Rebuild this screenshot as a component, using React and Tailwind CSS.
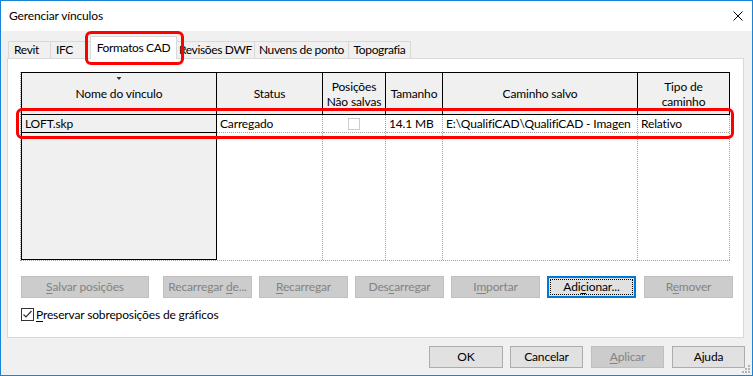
import React from "react";

function Btn({ w, children, disabled, focused, className = "" }) {
  if (focused) {
    return (
      <div className={`h-[22px] ${w} border-2 border-[#0078d7] bg-[#e1e1e1] p-[1px] ${className}`}>
        <div className="h-full w-full border border-dotted border-black flex items-center justify-center text-black">
          {children}
        </div>
      </div>
    );
  }
  return (
    <div
      className={`h-[22px] ${w} border flex items-center justify-center ${
        disabled ? "bg-[#cccccc] border-[#bfbfbf] text-[#838383]" : "bg-[#e1e1e1] border-[#adadad] text-black"
      } ${className}`}
    >
      {children}
    </div>
  );
}

const U = ({ children }) => <span className="underline underline-offset-2">{children}</span>;

export default function App() {
  return (
    <div className="relative w-[753px] h-[376px] overflow-hidden bg-[#f0f0f0] border border-[#1883d7] font-['Lato','Noto_Sans',sans-serif] text-[12px] leading-none text-black whitespace-nowrap tracking-[-0.15px]">
      {/* Title bar */}
      <div className="h-[30px] bg-white flex items-center justify-between pl-[8px] pr-[9px]">
        <span className="text-[12px]">Gerenciar vínculos</span>
        <svg width="10" height="10" viewBox="0 0 10 10">
          <path d="M0.5 0.5L9.5 9.5M9.5 0.5L0.5 9.5" stroke="#000" strokeWidth="1" fill="none" />
        </svg>
      </div>

      <div className="pl-[6px] pr-[8px]">
        {/* Tabs */}
        <div className="h-[27px] flex items-end pl-[1px] tracking-[-0.35px]">
          <div className="h-[17px] w-[42px] border-l border-t border-[#d9d9d9] flex items-center pl-[5px]">Revit</div>
          <div className="h-[17px] w-[40px] border-l border-t border-[#d9d9d9] flex items-center pl-[5px]">IFC</div>
          <div className="relative z-10 -mb-[1px] h-[23px] w-[87px] border-l border-t border-r border-[#d9d9d9] bg-white flex items-center justify-center pb-[1px]">
            Formatos CAD
          </div>
          <div className="h-[17px] w-[78px] border-t border-r border-[#d9d9d9] flex items-center justify-center">Revisões DWF</div>
          <div className="h-[17px] w-[94px] border-t border-r border-[#d9d9d9] flex items-center justify-center">Nuvens de ponto</div>
          <div className="h-[17px] w-[62px] border-t border-r border-[#d9d9d9] flex items-center justify-center">Topografia</div>
        </div>

        {/* Panel */}
        <div className="h-[280px] bg-white border border-[#d9d9d9] pl-[12px] pt-[13px]">
          {/* Table */}
          <div className="w-[710px] border-l border-[#a0a0a0] border-b border-b-[#a0a0a0] border-dotted">
            {/* header */}
            <div className="flex h-[43px] border-t border-b border-black bg-[#f0f0f0] border-solid">
              <div className="relative w-[196px] border-l border-r border-black border-solid flex items-center justify-center">
                <svg className="absolute top-[4px] left-1/2 -translate-x-1/2" width="5" height="3" viewBox="0 0 5 3">
                  <path d="M0 0H5L2.5 3Z" fill="#333" />
                </svg>
                Nome do vínculo
              </div>
              <div className="w-[106px] border-r border-black border-solid flex items-center justify-center">Status</div>
              <div className="w-[63px] border-r border-black border-solid flex flex-col items-center justify-center leading-[15px] text-center">
                <span>Posições</span>
                <span>Não salvas</span>
              </div>
              <div className="w-[57px] border-r border-black border-solid flex items-center justify-center">Tamanho</div>
              <div className="w-[195px] border-r border-black border-solid flex items-center justify-center">Caminho salvo</div>
              <div className="w-[92px] border-r border-black border-solid flex flex-col items-center justify-center leading-[15px] text-center">
                <span>Tipo de</span>
                <span>caminho</span>
              </div>
            </div>
            {/* body */}
            <div className="flex h-[145px]">
              <div className="w-[196px] bg-[#f0f0f0] border-l border-r border-b border-black border-solid flex flex-col">
                <div className="h-[18px] border-b border-black border-solid flex items-center pl-[3px]">LOFT.skp</div>
              </div>
              <div className="w-[106px] border-r border-dotted border-[#a0a0a0]">
                <div className="h-[18px] border-b border-dotted border-[#a0a0a0] flex items-center pl-[3px]">Carregado</div>
              </div>
              <div className="w-[63px] border-r border-dotted border-[#a0a0a0]">
                <div className="h-[18px] border-b border-dotted border-[#a0a0a0] flex items-center justify-center">
                  <div className="w-[12px] h-[12px] border border-[#cccccc] border-solid bg-white" />
                </div>
              </div>
              <div className="w-[57px] border-r border-dotted border-[#a0a0a0]">
                <div className="h-[18px] border-b border-dotted border-[#a0a0a0] flex items-center pl-[3px]">14.1 MB</div>
              </div>
              <div className="w-[195px] border-r border-dotted border-[#a0a0a0]">
                <div className="h-[18px] border-b border-dotted border-[#a0a0a0] flex items-center pl-[3px]">
                  E:\QualifiCAD\QualifiCAD - Imagen
                </div>
              </div>
              <div className="w-[92px] border-r border-dotted border-[#a0a0a0]">
                <div className="h-[18px] border-b border-dotted border-[#a0a0a0] flex items-center pl-[3px]">Relativo</div>
              </div>
            </div>
          </div>

          {/* Buttons */}
          <div className="mt-[15px] flex pl-[1px]">
            <Btn w="w-[128px]" disabled>
              <span><U>S</U>alvar posições</span>
            </Btn>
            <Btn w="w-[89px]" disabled className="ml-[14px]">
              <span>Recarregar <U>d</U>e...</span>
            </Btn>
            <Btn w="w-[89px]" disabled className="ml-[7px]">
              <span><U>R</U>ecarregar</span>
            </Btn>
            <Btn w="w-[89px]" disabled className="ml-[7px]">
              <span>Des<U>c</U>arregar</span>
            </Btn>
            <Btn w="w-[89px]" disabled className="ml-[7px]">
              <span>I<U>m</U>portar</span>
            </Btn>
            <Btn w="w-[89px]" focused className="ml-[7px]">
              <span>Adi<U>c</U>ionar...</span>
            </Btn>
            <Btn w="w-[89px]" disabled className="ml-[8px]">
              <span>R<U>e</U>mover</span>
            </Btn>
          </div>

          {/* Checkbox */}
          <div className="mt-[10px] flex items-center pl-[1px]">
            <div className="w-[13px] h-[13px] border border-[#333333] bg-white flex items-center justify-center">
              <svg width="11" height="11" viewBox="0 0 11 11">
                <path d="M1.5 5.5L4 8L9.5 2" stroke="#333" strokeWidth="1.2" fill="none" />
              </svg>
            </div>
            <span className="ml-[2px]"><U>P</U>reservar sobreposições de gráficos</span>
          </div>
        </div>

        {/* Bottom buttons */}
        <div className="mt-[8px] flex justify-end -mr-[1px]">
          <Btn w="w-[74px]">OK</Btn>
          <Btn w="w-[73px]" className="ml-[7px]">Cancelar</Btn>
          <Btn w="w-[73px]" disabled className="ml-[8px]">
            <span><U>A</U>plicar</span>
          </Btn>
          <Btn w="w-[73px]" className="ml-[8px]">Ajuda</Btn>
        </div>
      </div>

      {/* Resize grip */}
      <svg className="absolute right-[1px] bottom-[1px]" width="11" height="11" viewBox="0 0 11 11">
        <rect x="8" y="2" width="2" height="2" fill="#b4b4b4" />
        <rect x="5" y="5" width="2" height="2" fill="#b4b4b4" />
        <rect x="8" y="5" width="2" height="2" fill="#b4b4b4" />
        <rect x="2" y="8" width="2" height="2" fill="#b4b4b4" />
        <rect x="5" y="8" width="2" height="2" fill="#b4b4b4" />
        <rect x="8" y="8" width="2" height="2" fill="#b4b4b4" />
      </svg>

      {/* Red highlight overlays */}
      <div className="absolute left-[84px] top-[30px] w-[99px] h-[34px] border-[3px] border-[#ff0000] rounded-[6px] pointer-events-none" />
      <div className="absolute left-[15px] top-[107px] w-[718px] h-[31px] border-[3px] border-[#ff0000] rounded-[6px] pointer-events-none" />
    </div>
  );
}
